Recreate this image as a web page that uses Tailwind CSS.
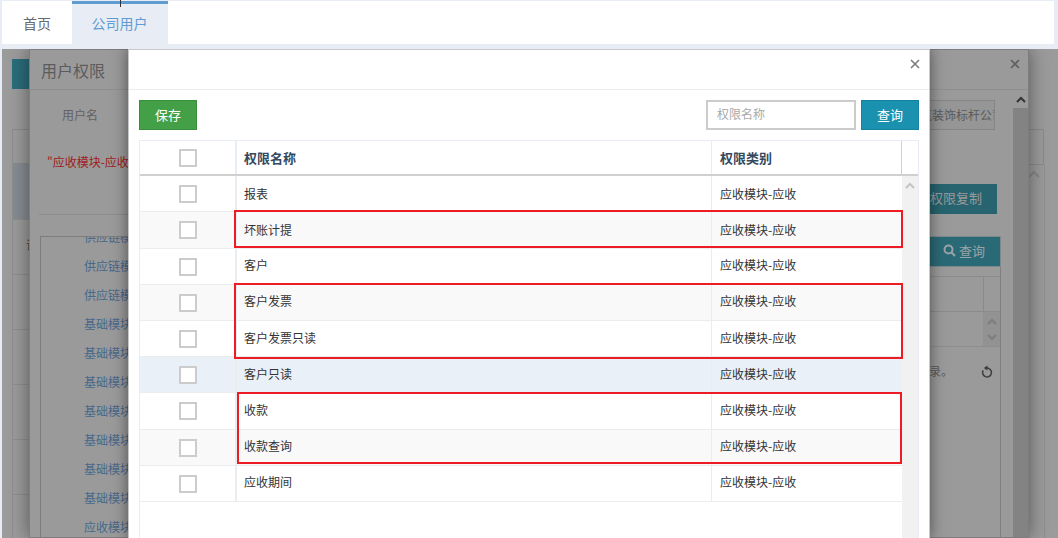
<!DOCTYPE html>
<html lang="zh-CN">
<head>
    <meta charset="UTF-8">
    <title>用户权限</title>
    <script src="https://cdn.jsdelivr.net/npm/@tailwindcss/browser@4"></script>
</head>
<body class="bg-[#e8ecf4] font-['Noto_Sans_CJK_SC','Liberation_Sans',sans-serif] text-xs text-[#333]">
<div class="relative w-[1058px] h-[538px] overflow-hidden">

    <!-- Tabs -->
    <div class="relative ml-[2px] mr-[4px] mt-[1px] h-[43px] bg-white flex">
        <div class="w-[70px] flex items-center justify-center text-sm text-[#676a6c]">首页</div>
        <div class="w-[96px] bg-[#e8ecf4] border-t-[3px] border-[#5f9cd2] flex items-center justify-center pb-[3px] pr-[1px] text-sm text-[#5f9cd2]">公司用户</div>
        <div class="absolute left-[118px] top-[-1px] w-px h-[7px] bg-[#333]"></div>
    </div>

    <!-- Page under the backdrop -->
    <div class="absolute left-[2px] right-0 top-[49px] bottom-0 bg-[#9b9b9b] overflow-hidden">
        <div class="absolute left-[10px] top-[10px] w-[30px] h-[30px] bg-[#2b6d7b]"></div>
        <div class="absolute left-[10px] top-[80px] w-[30px] h-[409px] border-l border-[#8e8e8e]">
            <div class="h-[35px] border-y border-[#8a8a8a]"></div>
            <div class="h-[56px] bg-[#868d92] border-b border-[#8e8e8e]"></div>
            <div class="h-[55px] border-b border-[#8e8e8e] pl-[13px] pt-[17px] text-[#444]">请</div>
            <div class="h-[55px] border-b border-[#8e8e8e]"></div>
            <div class="h-[55px] border-b border-[#8e8e8e]"></div>
            <div class="h-[55px] border-b border-[#8e8e8e]"></div>
            <div class="h-[55px] border-b border-[#8e8e8e]"></div>
        </div>
        <div class="absolute left-[1027px] top-[80px] w-[15px] h-[36px] border-y border-r border-[#8a8a8a]"></div>
        <svg class="absolute left-[1025px] top-[120px]" width="14" height="10" viewBox="0 0 14 10" fill="none" stroke="#878787" stroke-width="2"><path d="M2 8l5-5 5 5"/></svg>
        <div class="absolute left-[1042px] top-[116px] bottom-0 w-px bg-[#8e8e8e]"></div>

        <!-- User permission window, behind -->
        <div class="absolute left-[27px] top-0 w-[1000px] h-[489px] bg-[#9a9a9a] border border-[#7d7d7d] shadow-[0_0_18px_rgba(0,0,0,0.45)] overflow-hidden">
            <div class="h-[40px] border-b border-[#8f8f8f] pl-[11px] flex items-center text-base text-[#5c5c5c] leading-none">用户权限</div>
            <div class="absolute left-[32px] top-[56px] text-[#626262] leading-[18px]">用户名</div>
            <div class="absolute left-[17px] top-[103px] text-[#a11a1e] leading-[18px]">"应收模块-应收</div>
            <div class="absolute left-[9px] top-[164px] w-[90px] h-px bg-[#8d8d8d]"></div>

            <!-- Permission list -->
            <div class="absolute left-[10px] top-[186px] w-[200px] h-[303px] border-l border-t border-[#7d7d7d] overflow-hidden pl-[43px] text-[#47688a] leading-[18px]">
                <div class="mt-[-9px] flex flex-col gap-[11px] whitespace-nowrap">
                    <div>供应链模块</div>
                    <div>供应链模块</div>
                    <div>供应链模块</div>
                    <div>基础模块</div>
                    <div>基础模块</div>
                    <div>基础模块</div>
                    <div>基础模块</div>
                    <div>基础模块</div>
                    <div>基础模块</div>
                    <div>基础模块</div>
                    <div>应收模块</div>
                </div>
            </div>

            <!-- Right side fragments -->
            <div class="absolute left-[880px] top-[50px] w-[85px] h-[30px] border border-[#858585] bg-[#969696] pl-[9px] flex items-center overflow-hidden whitespace-nowrap text-[#5a5a5a]">筑装饰标杆公司</div>
            <div class="absolute left-[880px] top-[134px] w-[87px] h-[30px] bg-[#27646f] text-[#9a9a9a] flex items-center justify-end pr-[15px] pb-[2px] text-[13px]">权限复制</div>
            <div class="absolute left-[880px] top-[186px] w-[91px] h-[31px] bg-[#2a6a77] border border-[#7d8a8d] text-[#9aa3a5] flex items-center justify-end pr-[15px] pb-[2px] gap-[3px] text-[13px]">
                <svg width="13" height="13" viewBox="0 0 13 13" fill="none" stroke="#9aa3a5" stroke-width="2"><circle cx="5.5" cy="5.5" r="4"/><path d="M8.5 8.5l3.5 3.5"/></svg>
                <span>查询</span>
            </div>
            <div class="absolute left-[880px] top-[217px] w-[91px] h-[321px] border-r border-[#808080]">
                <div class="h-[9px]"></div>
                <div class="h-[36px] border-y border-[#8a8a8a] flex justify-end"><div class="w-[17px] border-l border-[#8a8a8a]"></div></div>
                <div class="h-[35px] border-b border-[#8a8f94] flex justify-end">
                    <div class="w-[17px] bg-[#929292] flex flex-col items-center justify-center gap-[9px]">
                        <svg width="10" height="7" viewBox="0 0 10 7" fill="none" stroke="#7d7d7d" stroke-width="2"><path d="M1 6l4-4 4 4"/></svg>
                        <svg width="10" height="7" viewBox="0 0 10 7" fill="none" stroke="#7d7d7d" stroke-width="2"><path d="M1 1l4 4 4-4"/></svg>
                    </div>
                </div>
                <div class="h-[50px] flex items-center justify-between pr-[7px] pb-[2px]">
                    <span class="text-[#5c5c5c] pl-[19px]">录。</span>
                    <svg width="12" height="13" viewBox="0 0 12 13" fill="none" stroke="#3c3c3c" stroke-width="1.5"><path d="M6 3.1A4.4 4.4 0 1 1 2.2 5.3"/><path d="M6.5 .4v5.2L2.8 3z" fill="#3c3c3c" stroke="none"/></svg>
                </div>
            </div>
            <svg class="absolute left-[979px] top-[8px]" width="12" height="12" viewBox="0 0 12 12" fill="none" stroke="#5e5e5e" stroke-width="1.6"><path d="M2 2l8 8M10 2l-8 8"/></svg>
            <div class="absolute left-[983px] top-[40px] bottom-0 w-[15px] bg-[#838383]">
                <div class="h-[18px] bg-[#9a9a9a] flex items-center justify-center">
                    <svg width="10" height="7" viewBox="0 0 10 7" fill="none" stroke="#333" stroke-width="2"><path d="M1 6l4-4 4 4"/></svg>
                </div>
            </div>
        </div>

        <!-- Permission picker window, front -->
        <div class="absolute left-[126px] top-0 w-[802px] h-[489px] bg-white border-t border-x border-[#c8c8c8] shadow-[0_0_14px_rgba(0,0,0,0.5)]">
            <div class="h-[40px] border-b border-[#e9edf0] flex justify-end items-start pr-[9px] pt-[9px]">
                <svg width="10" height="10" viewBox="0 0 10 10" fill="none" stroke="#777" stroke-width="1.5"><path d="M1 1l8 8M9 1l-8 8"/></svg>
            </div>
            <div class="px-[10px] pt-[10px]">
                <div class="flex items-stretch h-[30px]">
                    <button class="w-[58px] bg-[#43a047] border border-[#388e3c] text-white text-[13px]">保存</button>
                    <div class="ml-auto w-[150px] border-2 border-[#ccc] pl-[9px] pb-[2px] flex items-center text-[#a9a9a9]">权限名称</div>
                    <button class="ml-[5px] w-[58px] bg-[#1b91b0] border border-[#17829e] text-white text-[13px]">查询</button>
                </div>

                <!-- Table -->
                <div class="mt-[10px] w-[780px] h-[398px] border-x border-t border-[#e8edf3]">
                    <div class="h-[35px] border-b-2 border-[#d0d0d0] flex font-bold text-[#34495e]">
                        <div class="w-[97px] border-r-2 border-[#e8edf3] pl-px flex items-center justify-center">
                            <span class="block w-[18px] h-[18px] border-2 border-[#ccc] bg-white"></span>
                        </div>
                        <div class="w-[475px] border-r border-[#e8edf3] pl-[7px] flex items-center text-[13px]">权限名称</div>
                        <div class="w-[190px] border-r border-[#d0d0d0] pl-[8px] flex items-center text-[13px]">权限类别</div>
                    </div>
                    <div class="flex h-[362px]">
                        <div class="w-[762px]">
                            <div class="h-[36px] border-b border-[#e9edf0] flex">
                                <div class="w-[97px] border-r-2 border-[#e9edf0] pl-px flex items-center justify-center"><span class="block w-[18px] h-[18px] border-2 border-[#ccc] bg-white"></span></div>
                                <div class="w-[475px] border-r border-[#e9edf0] pl-[7px] flex items-center">报表</div>
                                <div class="pl-[8px] flex items-center">应收模块-应收</div>
                            </div>
                            <div class="h-[37px] border-b border-[#e9edf0] flex bg-[#f9f9f9]">
                                <div class="w-[97px] border-r-2 border-[#e9edf0] pl-px flex items-center justify-center"><span class="block w-[18px] h-[18px] border-2 border-[#ccc] bg-white"></span></div>
                                <div class="w-[475px] border-r border-[#e9edf0] pl-[7px] pb-[1px] flex items-center">坏账计提</div>
                                <div class="pl-[8px] pb-[1px] flex items-center">应收模块-应收</div>
                            </div>
                            <div class="h-[36px] border-b border-[#e9edf0] flex">
                                <div class="w-[97px] border-r-2 border-[#e9edf0] pl-px flex items-center justify-center"><span class="block w-[18px] h-[18px] border-2 border-[#ccc] bg-white"></span></div>
                                <div class="w-[475px] border-r border-[#e9edf0] pl-[7px] pb-[3px] flex items-center">客户</div>
                                <div class="pl-[8px] pb-[3px] flex items-center">应收模块-应收</div>
                            </div>
                            <div class="h-[36px] border-b border-[#e9edf0] flex bg-[#f9f9f9]">
                                <div class="w-[97px] border-r-2 border-[#e9edf0] pl-px flex items-center justify-center"><span class="block w-[18px] h-[18px] border-2 border-[#ccc] bg-white"></span></div>
                                <div class="w-[475px] border-r border-[#e9edf0] pl-[7px] pb-[4px] flex items-center">客户发票</div>
                                <div class="pl-[8px] pb-[4px] flex items-center">应收模块-应收</div>
                            </div>
                            <div class="h-[36px] border-b border-[#e9edf0] flex">
                                <div class="w-[97px] border-r-2 border-[#e9edf0] pl-px flex items-center justify-center"><span class="block w-[18px] h-[18px] border-2 border-[#ccc] bg-white"></span></div>
                                <div class="w-[475px] border-r border-[#e9edf0] pl-[7px] pb-[2px] flex items-center">客户发票只读</div>
                                <div class="pl-[8px] pb-[2px] flex items-center">应收模块-应收</div>
                            </div>
                            <div class="h-[36px] border-b border-[#e9edf0] flex bg-[#e9f0f7]">
                                <div class="w-[97px] border-r-2 border-[#e9edf0] pl-px flex items-center justify-center"><span class="block w-[18px] h-[18px] border-2 border-[#ccc] bg-white"></span></div>
                                <div class="w-[475px] border-r border-[#e9edf0] pl-[7px] pb-[2px] flex items-center">客户只读</div>
                                <div class="pl-[8px] pb-[2px] flex items-center">应收模块-应收</div>
                            </div>
                            <div class="h-[37px] border-b border-[#e9edf0] flex">
                                <div class="w-[97px] border-r-2 border-[#e9edf0] pl-px flex items-center justify-center"><span class="block w-[18px] h-[18px] border-2 border-[#ccc] bg-white"></span></div>
                                <div class="w-[475px] border-r border-[#e9edf0] pl-[7px] pb-[3px] flex items-center">收款</div>
                                <div class="pl-[8px] pb-[3px] flex items-center">应收模块-应收</div>
                            </div>
                            <div class="h-[36px] border-b border-[#e9edf0] flex bg-[#f9f9f9]">
                                <div class="w-[97px] border-r-2 border-[#e9edf0] pl-px flex items-center justify-center"><span class="block w-[18px] h-[18px] border-2 border-[#ccc] bg-white"></span></div>
                                <div class="w-[475px] border-r border-[#e9edf0] pl-[7px] pb-[4px] flex items-center">收款查询</div>
                                <div class="pl-[8px] pb-[4px] flex items-center">应收模块-应收</div>
                            </div>
                            <div class="h-[36px] border-b border-[#e9edf0] flex">
                                <div class="w-[97px] border-r-2 border-[#e9edf0] pl-px flex items-center justify-center"><span class="block w-[18px] h-[18px] border-2 border-[#ccc] bg-white"></span></div>
                                <div class="w-[475px] border-r border-[#e9edf0] pl-[7px] pb-[4px] flex items-center">应收期间</div>
                                <div class="pl-[8px] pb-[4px] flex items-center">应收模块-应收</div>
                            </div>
                        </div>
                        <div class="w-[16px] bg-[#f1f1f1] flex justify-center pt-[6px]">
                            <svg width="10" height="7" viewBox="0 0 10 7" fill="none" stroke="#c4c4c4" stroke-width="2"><path d="M1 6l4-4 4 4"/></svg>
                        </div>
                    </div>
                </div>
            </div>
        </div>
    </div>

    <!-- Red annotation boxes -->
    <div class="absolute left-[234px] top-[210px] w-[669px] h-[38px] border-2 border-[#ed1c24]"></div>
    <div class="absolute left-[234px] top-[283px] w-[669px] h-[76px] border-2 border-[#ed1c24]"></div>
    <div class="absolute left-[237px] top-[392px] w-[665px] h-[72px] border-2 border-[#ed1c24]"></div>
</div>
</body>
</html>
